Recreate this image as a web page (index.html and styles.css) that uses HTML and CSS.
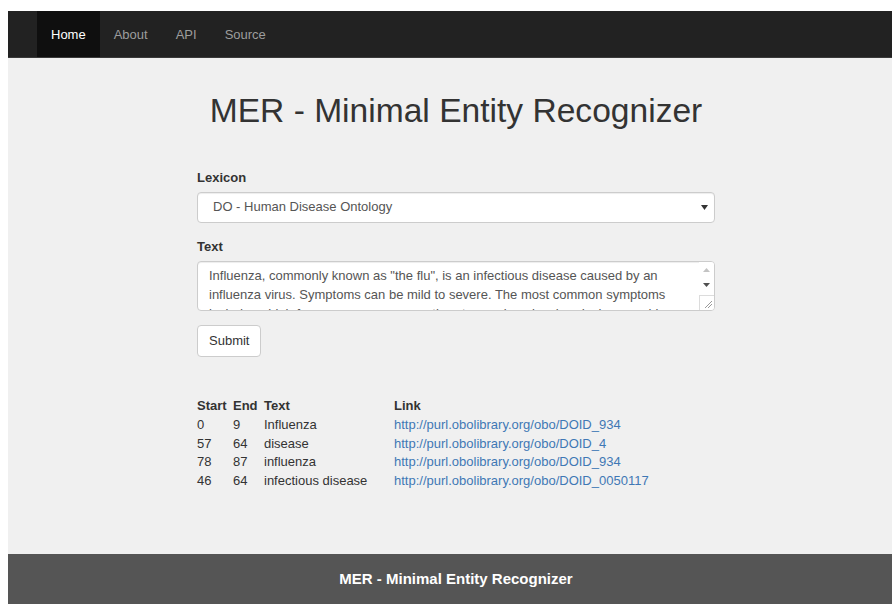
FILE: index.html
```html
<!DOCTYPE html>
<html lang="en">
<head>
<meta charset="utf-8">
<title>MER - Minimal Entity Recognizer</title>
<link rel="stylesheet" href="styles.css">
</head>
<body>
<nav class="navbar">
  <ul class="nav">
    <li><a class="nav-link active" href="#">Home</a></li>
    <li><a class="nav-link" href="#">About</a></li>
    <li><a class="nav-link" href="#">API</a></li>
    <li><a class="nav-link" href="#">Source</a></li>
  </ul>
</nav>

<main class="main">
  <div class="column">
    <h1 class="title">MER - Minimal Entity Recognizer</h1>

    <form class="form">
      <label class="label" for="lexicon">Lexicon</label>
      <div class="select-wrap">
        <select id="lexicon" class="select">
          <option>DO - Human Disease Ontology</option>
        </select>
        <span class="select-arrow">
          <svg width="7" height="5" viewBox="0 0 7 5"><path d="M0 0H7L3.5 5Z" fill="#333"/></svg>
        </span>
      </div>

      <label class="label" for="text">Text</label>
      <div class="textbox">
        <textarea id="text" class="textarea">Influenza, commonly known as "the flu", is an infectious disease caused by an influenza virus. Symptoms can be mild to severe. The most common symptoms include: a high fever, runny nose, sore throat, muscle pains, headache, coughing, and feeling tired.</textarea>
        <div class="scrollbar">
          <span class="scroll-btn">
            <svg width="7" height="4" viewBox="0 0 7 4"><path d="M0 4H7L3.5 0Z" fill="#c3c3c3"/></svg>
          </span>
          <span class="scroll-btn">
            <svg width="7" height="4" viewBox="0 0 7 4"><path d="M0 0H7L3.5 4Z" fill="#505050"/></svg>
          </span>
          <span class="grip">
            <svg width="8" height="8" viewBox="0 0 8 8"><path d="M1 8L8 1M4 8L8 4" stroke="#9a9a9a" stroke-width="1"/></svg>
          </span>
        </div>
      </div>

      <button type="button" class="btn">Submit</button>
    </form>

    <table class="results">
      <thead>
        <tr><th class="c-start">Start</th><th class="c-end">End</th><th class="c-text">Text</th><th>Link</th></tr>
      </thead>
      <tbody>
        <tr><td>0</td><td>9</td><td>Influenza</td><td><a href="#">http://purl.obolibrary.org/obo/DOID_934</a></td></tr>
        <tr><td>57</td><td>64</td><td>disease</td><td><a href="#">http://purl.obolibrary.org/obo/DOID_4</a></td></tr>
        <tr><td>78</td><td>87</td><td>influenza</td><td><a href="#">http://purl.obolibrary.org/obo/DOID_934</a></td></tr>
        <tr><td>46</td><td>64</td><td>infectious disease</td><td><a href="#">http://purl.obolibrary.org/obo/DOID_0050117</a></td></tr>
      </tbody>
    </table>
  </div>
</main>

<footer class="footer">MER - Minimal Entity Recognizer</footer>
</body>
</html>
```

FILE: styles.css
```css
html, body {
  overflow: hidden;
}

body {
  margin: 11px 0 0 8px;
  font-family: "Liberation Sans", Arial, sans-serif;
  font-size: 13px;
  line-height: 1.42857;
  color: #333;
  background: #fff;
}

/* top navigation bar */
.navbar {
  background: #222;
  height: 46px;
  border-bottom: 1px solid #3a3a3a;
}

.nav {
  list-style: none;
  margin: 0;
  padding: 0 0 0 29px;
  display: flex;
  height: 100%;
}

.nav-link {
  display: block;
  padding: 1px 14px 0;
  line-height: 45px;
  color: #9d9d9d;
  text-decoration: none;
}

.nav-link.active {
  color: #fff;
  background: #0f0f0f;
}

/* page body */
.main {
  background: #f0f0f0;
  height: 496px;
  padding-left: 12px;
  box-sizing: border-box;
}

.column {
  width: 518px;
  margin: 0 auto;
}

.title {
  margin: 0;
  padding-top: 35px;
  font-size: 33.6px;
  font-weight: 400;
  line-height: 1.1;
  text-align: center;
  color: #333;
}

.form {
  display: flex;
  flex-direction: column;
  align-items: flex-start;
  padding-top: 39px;
}

.label {
  font-weight: 700;
  margin-bottom: 4px;
}

.select-wrap {
  position: relative;
  width: 100%;
  margin-bottom: 15px;
}

.select {
  appearance: none;
  -webkit-appearance: none;
  display: block;
  width: 100%;
  height: 31px;
  padding: 0 15px;
  font: inherit;
  color: #555;
  background: #fff;
  border: 1px solid #ccc;
  border-radius: 4px;
  box-shadow: inset 0 1px 1px rgba(0, 0, 0, .075);
}

.select-arrow {
  position: absolute;
  right: 7px;
  top: 13px;
  display: flex;
}

.textbox {
  display: flex;
  width: 100%;
  height: 50px;
  box-sizing: border-box;
  background: #fff;
  border: 1px solid #ccc;
  border-radius: 4px;
  box-shadow: inset 0 1px 1px rgba(0, 0, 0, .075);
  overflow: hidden;
  margin: 1px 0 14px;
}

.textarea {
  flex: 1;
  border: none;
  background: transparent;
  resize: none;
  overflow: hidden;
  padding: 4px 11px;
  font: inherit;
  line-height: 19px;
  color: #555;
  outline: none;
}

.scrollbar {
  width: 15px;
  display: flex;
  flex-direction: column;
  background: #fff;
}

.scroll-btn {
  height: 15px;
  display: flex;
  align-items: center;
  justify-content: center;
}

.grip {
  margin-top: auto;
  height: 15px;
  display: flex;
  align-items: flex-end;
  justify-content: flex-end;
  border-top: 1px solid #dcdcdc;
  border-left: 1px solid #dcdcdc;
  padding: 0 2px 2px 0;
  box-sizing: border-box;
}

.btn {
  font: inherit;
  color: #333;
  background: #fff;
  border: 1px solid #ccc;
  border-radius: 4px;
  height: 32px;
  padding: 0 11px;
}

/* results table */
.results {
  border-collapse: collapse;
  margin-top: 40px;
}

.results th,
.results td {
  padding: 0;
  text-align: left;
  line-height: 18.8px;
}

.results th {
  font-weight: 700;
}

.c-start { width: 36px; }
.c-end { width: 31px; }
.c-text { width: 130px; }

.results a {
  color: #3f78b5;
  text-decoration: none;
}

.footer {
  background: #555;
  color: #fff;
  height: 50px;
  line-height: 50px;
  padding-left: 12px;
  text-align: center;
  font-size: 15px;
  font-weight: 700;
}
```
